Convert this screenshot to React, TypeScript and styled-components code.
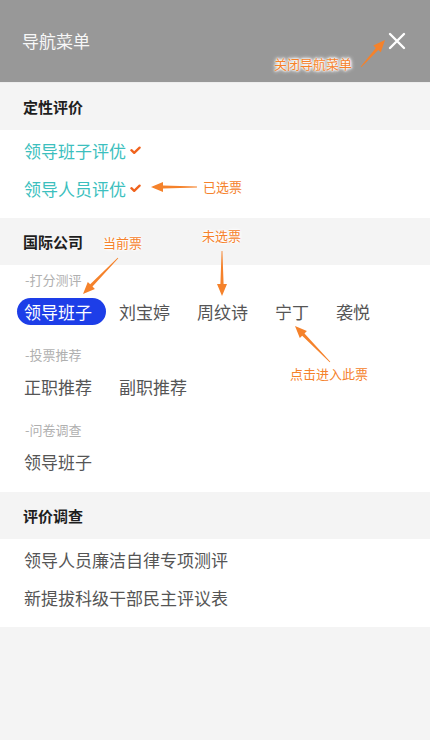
import React from 'react';
import styled, { createGlobalStyle } from 'styled-components';

const GlobalStyle = createGlobalStyle`
  html, body {
    margin: 0;
    padding: 0;
    background: #f4f4f4;
  }
  body {
    font-family: "Noto Sans CJK SC", "Noto Sans", sans-serif;
  }
`;

const ORANGE = '#f5822b';

const quality = ['领导班子评优', '领导人员评优'];

const groups = [
  { label: '-打分测评', items: ['领导班子', '刘宝婷', '周纹诗', '宁丁', '袭悦'], active: 0 },
  { label: '-投票推荐', items: ['正职推荐', '副职推荐'], active: -1 },
  { label: '-问卷调查', items: ['领导班子'], active: -1 },
];

const surveys = ['领导人员廉洁自律专项测评', '新提拔科级干部民主评议表'];

const notes = [
  { text: '关闭导航菜单', left: 274, top: 56 },
  { text: '已选票', left: 203, top: 179 },
  { text: '当前票', left: 103, top: 235 },
  { text: '未选票', left: 202, top: 228 },
  { text: '点击进入此票', left: 290, top: 366 },
];

// tail -> head
const arrows: [number, number, number, number][] = [
  [361, 67, 385, 40],
  [197, 187, 151, 187],
  [118, 258, 83, 294],
  [222, 251, 222, 296],
  [330, 362, 295, 326],
];

const arrowPoints = (x1: number, y1: number, x2: number, y2: number) => {
  const dx = x2 - x1;
  const dy = y2 - y1;
  const len = Math.sqrt(dx * dx + dy * dy);
  const ux = dx / len;
  const uy = dy / len;
  const nx = -uy;
  const ny = ux;
  const headLen = 12;
  const headW = 5;
  const bx = x2 - ux * headLen;
  const by = y2 - uy * headLen;
  const tail = 0.4;
  const neck = 1.6;
  const pts = [
    [x1 + nx * tail, y1 + ny * tail],
    [bx + nx * neck, by + ny * neck],
    [bx + nx * headW, by + ny * headW],
    [x2, y2],
    [bx - nx * headW, by - ny * headW],
    [bx - nx * neck, by - ny * neck],
    [x1 - nx * tail, y1 - ny * tail],
  ];
  return pts.map((p) => p.map((v) => v.toFixed(1)).join(',')).join(' ');
};

const CloseIcon = () => (
  <svg width="18" height="18" viewBox="0 0 18 18">
    <path d="M2 2 L16 16 M16 2 L2 16" stroke="#fff" strokeWidth="2.4" strokeLinecap="round" />
  </svg>
);

const CheckIcon = () => (
  <svg width="11" height="9" viewBox="0 0 11 9">
    <path d="M1.4 4.2 L4.2 6.9 L9.6 1.6" fill="none" stroke="#f0621c" strokeWidth="2.3" strokeLinecap="round" strokeLinejoin="round" />
  </svg>
);

const App = () => {
  return (
    <>
      <GlobalStyle />
      <Page>
        <Header>
          <HeaderTitle>导航菜单</HeaderTitle>
          <CloseButton>
            <CloseIcon />
          </CloseButton>
        </Header>

        <SectionTitle>定性评价</SectionTitle>
        <Block>
          {quality.map((q) => (
            <QualityRow key={q}>
              {q}
              <CheckIcon />
            </QualityRow>
          ))}
        </Block>

        <SectionTitle>国际公司</SectionTitle>
        <GroupBlock>
          {groups.map((g) => (
            <Group key={g.label}>
              <GroupLabel>{g.label}</GroupLabel>
              <ChipRow>
                {g.items.map((item, i) => (
                  <Chip key={item} $active={i === g.active}>
                    {item}
                  </Chip>
                ))}
              </ChipRow>
            </Group>
          ))}
        </GroupBlock>

        <SectionTitle>评价调查</SectionTitle>
        <Block>
          {surveys.map((s) => (
            <SurveyRow key={s}>{s}</SurveyRow>
          ))}
        </Block>

        <Overlay width="430" height="740" viewBox="0 0 430 740">
          {arrows.map((a, i) => (
            <polygon key={i} points={arrowPoints(...a)} fill={ORANGE} />
          ))}
        </Overlay>
        {notes.map((n) => (
          <Note key={n.text} style={{ left: n.left, top: n.top }}>
            {n.text}
          </Note>
        ))}
      </Page>
    </>
  );
};

export default App;

const Page = styled.div`
  position: relative;
  width: 430px;
  height: 740px;
  overflow: hidden;
  background: #f4f4f4;
`;

const Header = styled.div`
  height: 82px;
  background: #989898;
  border-bottom: 1px solid #ededed;
  display: flex;
  align-items: center;
  justify-content: space-between;
  padding: 0 24px 0 22px;
`;

const HeaderTitle = styled.div`
  color: #f7f7f7;
  font-size: 17px;
  line-height: 20px;
`;

const CloseButton = styled.div`
  display: flex;
  align-items: center;
`;

const SectionTitle = styled.div`
  height: 47px;
  display: flex;
  align-items: center;
  padding-left: 23px;
  background: #f4f4f4;
  color: #1e1e1e;
  font-size: 15px;
  font-weight: 700;
`;

const Block = styled.div`
  background: #fff;
  padding: 1px 0 11px;
`;

const QualityRow = styled.div`
  height: 38px;
  display: flex;
  align-items: center;
  gap: 4px;
  padding-left: 24px;
  font-size: 17px;
  color: #3cbfbe;
`;

const SurveyRow = styled.div`
  height: 38px;
  display: flex;
  align-items: center;
  padding-left: 24px;
  font-size: 17px;
  color: #555;
`;

const GroupBlock = styled.div`
  background: #fff;
  padding: 2px 0 0;
`;

const Group = styled.div`
  padding-bottom: 11px;
`;

const GroupLabel = styled.div`
  height: 24px;
  display: flex;
  align-items: center;
  padding-left: 25px;
  font-size: 13px;
  color: #b0b0b0;
`;

const ChipRow = styled.div`
  height: 40px;
  display: flex;
  align-items: center;
  gap: 13px;
  padding-left: 17px;
`;

const Chip = styled.div<{ $active?: boolean }>`
  height: 27px;
  display: flex;
  align-items: center;
  font-size: 17px;
  border-radius: 14px;
  padding: ${({ $active }) => ($active ? '0 14px 0 7px' : '0 7px')};
  margin-right: ${({ $active }) => ($active ? '-7px' : '0')};
  background: ${({ $active }) => ($active ? '#1d3ee8' : 'transparent')};
  color: ${({ $active }) => ($active ? '#fff' : '#555')};
`;

const Overlay = styled.svg`
  position: absolute;
  left: 0;
  top: 0;
  pointer-events: none;
`;

const Note = styled.div`
  position: absolute;
  font-size: 13px;
  line-height: 16px;
  color: ${ORANGE};
  white-space: nowrap;
  text-shadow: 0 0 2px #fff, 0 0 2px #fff, 0 0 3px #fff, 0 0 4px #fff, 0 0 5px #fff;
`;
